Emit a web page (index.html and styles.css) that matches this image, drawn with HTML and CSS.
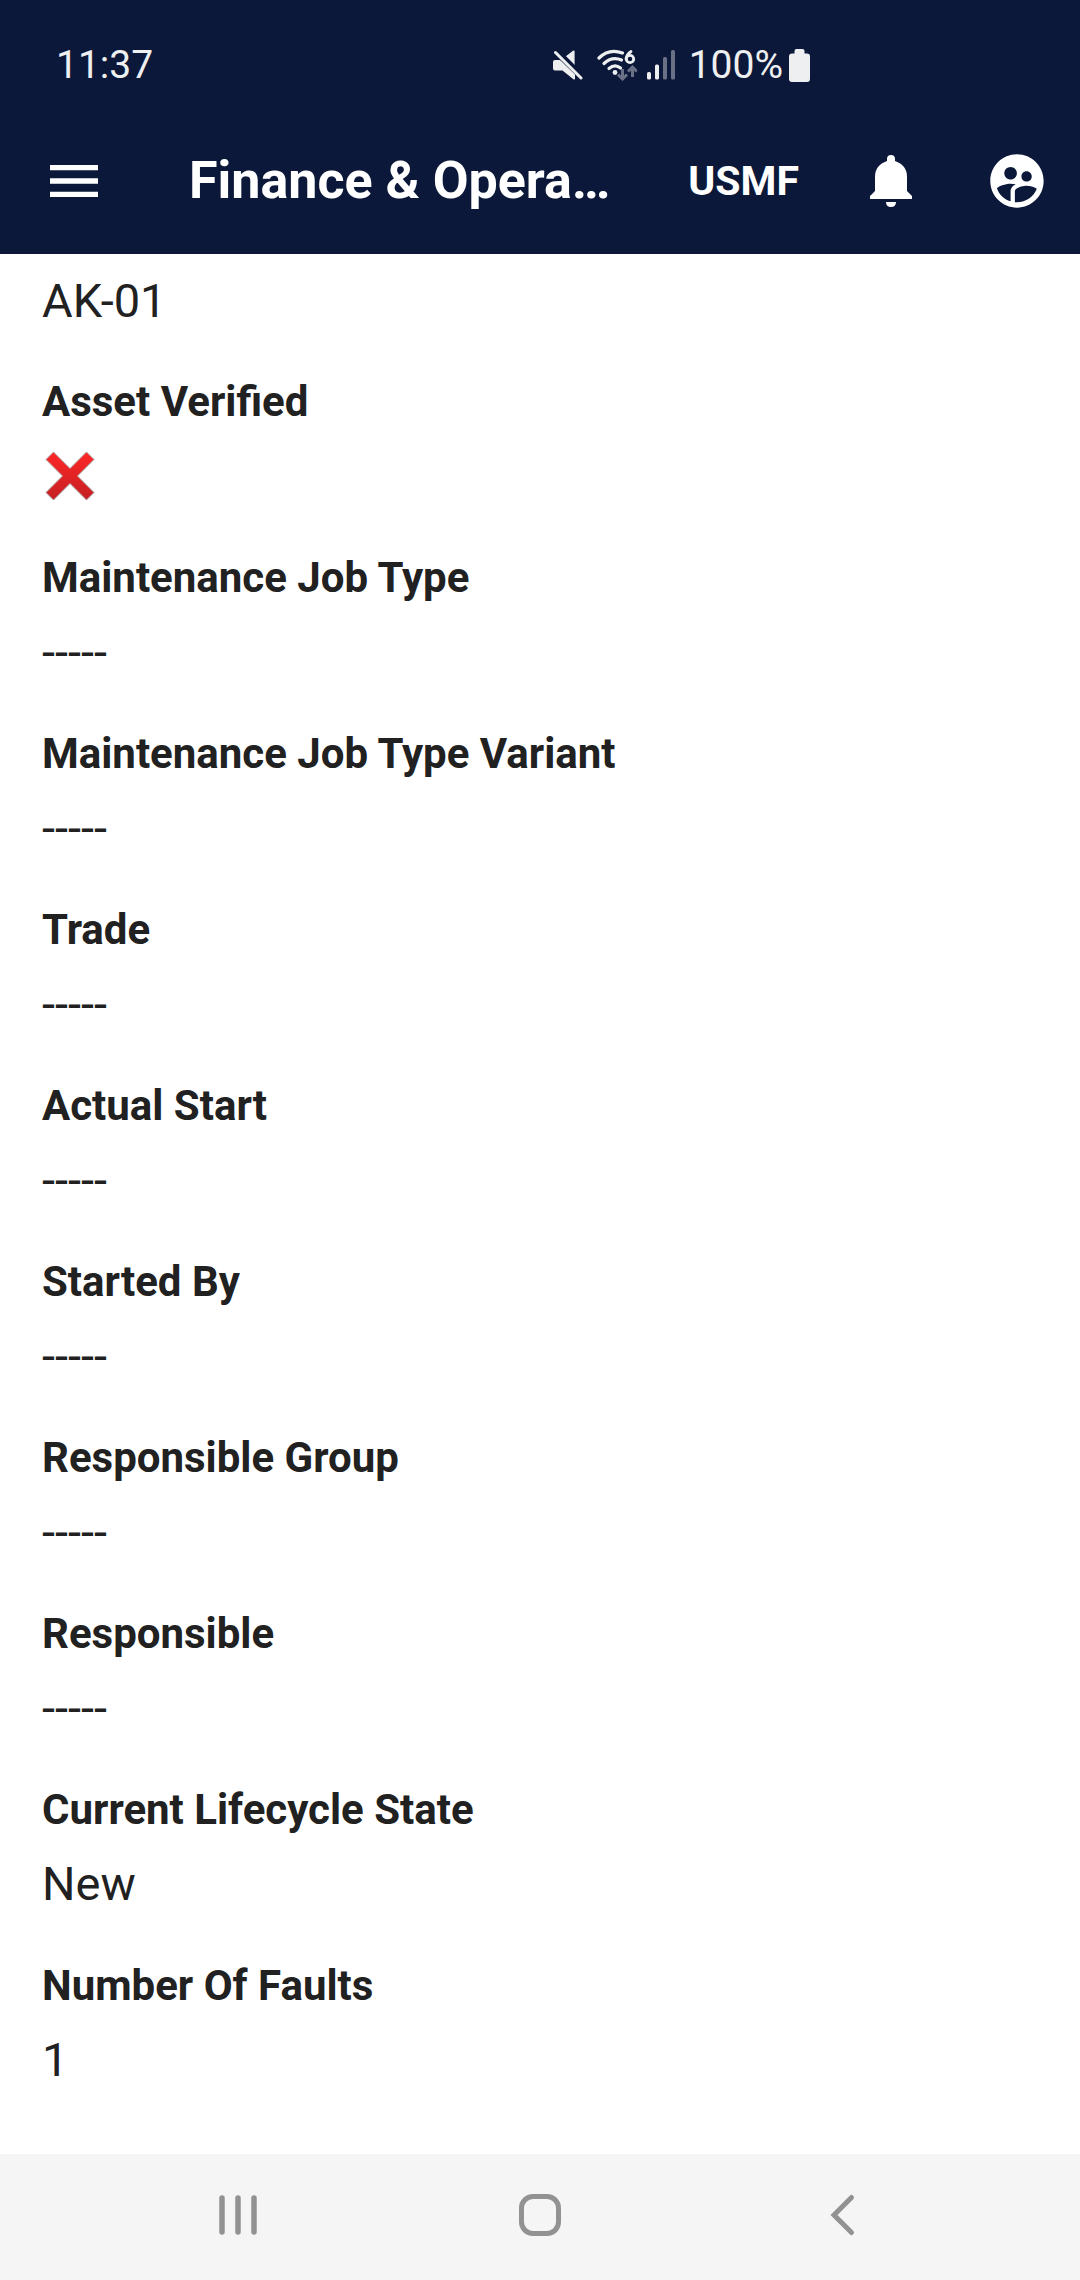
FILE: index.html
```html
<!DOCTYPE html>
<html lang="en">
<head>
<meta charset="utf-8">
<meta name="viewport" content="width=device-width, initial-scale=1">
<title>Finance &amp; Operations</title>
<link rel="stylesheet" href="styles.css">
</head>
<body>
<header class="header">
  <div class="status">
    <span class="status-time">11:37</span>
    <div class="status-icons">
      <svg class="icon-mute" width="30" height="32" viewBox="0 0 30 32" aria-hidden="true">
        <path fill="#eeeff1" d="M12.500 7.500 20 1.800q1.600-.8 1.600.8v14.200zM2 11h5l15 14.500v4q0 1.700-1.600.7L9.500 21.500H2q-2 0-2-2V13q0-2 2-2z"/>
        <path stroke="#0b1839" stroke-width="2.500" d="M5 1 31 27"/>
        <path stroke="#eeeff1" stroke-width="3" stroke-linecap="round" d="M2.500 3.500 28 29"/>
      </svg>
      <svg class="icon-wifi" width="40" height="32" viewBox="0 0 40 32" aria-hidden="true">
        <g fill="none" stroke="#eeeff1" stroke-width="3.200" stroke-linecap="round">
          <path d="M2 9Q12-1 25.500 4"/>
          <path d="M7 14.500Q15 7 24.500 11"/>
          <path d="M12 19.500Q18 14.500 23.500 19"/>
          <path stroke="#0b1839" stroke-width="6" d="M34 2Q29 6 29 10"/>
          <path stroke-width="2.800" d="M34 2.500Q29.500 5.500 29 10"/>
          <circle cx="33" cy="10" r="3.700" stroke-width="2.800"/>
        </g>
        <circle cx="18" cy="23.500" r="2.400" fill="#eeeff1"/>
        <path fill="none" stroke="#6a7187" stroke-width="3" d="M25.500 20v10M21 25.500l4.500 4.500 4.500-4.500M35.500 28V18M31 22.500l4.500-4.500 4.500 4.500"/>
      </svg>
      <svg class="icon-signal" width="28" height="32" viewBox="0 0 28 32" aria-hidden="true">
        <g fill="#eeeff1"><rect y="23" width="4" height="7.500" rx="1.500"/><rect x="8" y="15.500" width="4" height="15" rx="1.500"/></g>
        <g fill="#6a7187"><rect x="16" y="8" width="4" height="22.500" rx="1.500"/><rect x="24" y="1" width="4" height="29.500" rx="1.500"/></g>
      </svg>
      <span class="status-battery">100%</span>
      <svg class="icon-battery" width="21" height="33" viewBox="0 0 21 33" aria-hidden="true">
        <path fill="#eeeff1" d="M7.500 0h6q2 0 2 2v2.500H18q3 0 3 3V30q0 3-3 3H3q-3 0-3-3V7.500q0-3 3-3h2.500V2q0-2 2-2z"/>
      </svg>
    </div>
  </div>
  <div class="appbar">
    <button class="icon-button" type="button" aria-label="Menu">
      <svg width="64" height="64" viewBox="0 0 24 24"><path fill="#fff" d="M3 18h18v-2H3v2zm0-5h18v-2H3v2zm0-7v2h18V6H3z"/></svg>
    </button>
    <h1 class="title">Finance &amp; Opera…</h1>
    <button class="company" type="button">USMF</button>
    <button class="icon-button bell" type="button" aria-label="Notifications">
      <svg width="64" height="64" viewBox="0 0 64 64"><path fill="#fff" d="M28 10q0-4 4-4t4 4v2q12 4 12 16v14l5 5v3H11v-3l5-5V28q0-12 12-16zM27 53h10q0 5-5 5t-5-5z"/></svg>
    </button>
    <button class="icon-button" type="button" aria-label="Account">
      <svg width="64" height="64" viewBox="0 0 24 24"><path fill="#fff" d="M11.990 2c-5.520 0-10 4.480-10 10s4.480 10 10 10 10-4.480 10-10-4.480-10-10-10zm3.610 6.340c1.070 0 1.930.86 1.930 1.930 0 1.070-.86 1.930-1.930 1.930-1.070 0-1.930-.86-1.930-1.930-.01-1.070.86-1.930 1.930-1.930zm-6-1.580c1.300 0 2.360 1.060 2.360 2.360 0 1.300-1.060 2.360-2.360 2.360s-2.360-1.060-2.360-2.360c0-1.310 1.050-2.360 2.360-2.360zm0 9.130v3.750c-2.400-.75-4.300-2.600-5.140-4.960 1.050-1.120 3.670-1.690 5.140-1.690.53 0 1.200.08 1.900.22-1.640.87-1.900 2.020-1.900 2.680zM11.990 20c-.27 0-.53-.01-.79-.04v-4.070c0-1.420 2.940-2.130 4.400-2.130 1.070 0 2.920.39 3.840 1.150-1.170 2.970-4.060 5.090-7.450 5.090z"/></svg>
    </button>
  </div>
</header>

<main class="content">
  <p class="value">AK-01</p>
  <dl class="fields">
    <div class="field">
      <dt class="label">Asset Verified</dt>
      <dd class="value cross">
        <svg width="50" height="50" viewBox="0 0 50 50" role="img" aria-label="No">
          <defs><linearGradient id="red" x1="0" y1="0" x2="0" y2="1"><stop offset="0" stop-color="#ff2626"/><stop offset="1" stop-color="#c42024"/></linearGradient></defs>
          <path fill="url(#red)" stroke="#a9a3a3" stroke-width="1" d="M8.500 1 25 17.500 41.500 1 49 8.500 32.500 25 49 41.500 41.500 49 25 32.500 8.500 49 1 41.500 17.500 25 1 8.500z"/>
        </svg>
      </dd>
    </div>
    <div class="field"><dt class="label">Maintenance Job Type</dt><dd class="value">-----</dd></div>
    <div class="field"><dt class="label">Maintenance Job Type Variant</dt><dd class="value">-----</dd></div>
    <div class="field"><dt class="label">Trade</dt><dd class="value">-----</dd></div>
    <div class="field"><dt class="label">Actual Start</dt><dd class="value">-----</dd></div>
    <div class="field"><dt class="label">Started By</dt><dd class="value">-----</dd></div>
    <div class="field"><dt class="label">Responsible Group</dt><dd class="value">-----</dd></div>
    <div class="field"><dt class="label">Responsible</dt><dd class="value">-----</dd></div>
    <div class="field"><dt class="label">Current Lifecycle State</dt><dd class="value">New</dd></div>
    <div class="field"><dt class="label">Number Of Faults</dt><dd class="value">1</dd></div>
  </dl>
</main>

<nav class="navbar" aria-label="System">
  <button class="nav-button" type="button" aria-label="Recent apps">
    <svg width="48" height="48" viewBox="0 0 48 48"><path stroke="#929292" stroke-width="5.500" stroke-linecap="round" d="M8 7v34M24 7v34M40 7v34"/></svg>
  </button>
  <button class="nav-button" type="button" aria-label="Home">
    <svg width="48" height="48" viewBox="0 0 48 48"><rect x="5.500" y="5.500" width="37" height="37" rx="11.500" fill="none" stroke="#929292" stroke-width="5"/></svg>
  </button>
  <button class="nav-button" type="button" aria-label="Back">
    <svg width="48" height="48" viewBox="0 0 48 48"><path fill="none" stroke="#929292" stroke-width="5" stroke-linecap="round" d="M33.500 6.500 16 24l17.500 17.500"/></svg>
  </button>
</nav>
</body>
</html>
```
FILE: styles.css
```css
* {
  box-sizing: border-box;
}

body {
  margin: 0;
  min-height: 100vh;
  display: flex;
  flex-direction: column;
  background: #fff;
  color: #212121;
  font-family: Roboto, "Liberation Sans", sans-serif;
}

button {
  margin: 0;
  padding: 0;
  border: 0;
  background: none;
  color: inherit;
  font-family: inherit;
}

svg {
  display: block;
  flex: none;
}

.header {
  background: #0b1839;
  color: #fff;
}

.status {
  display: flex;
  align-items: center;
  justify-content: space-between;
  height: 108px;
  padding: 22px 25% 0 56px;
  color: #eeeff1;
  font-size: 39px;
  line-height: 48px;
}

.status-icons {
  display: flex;
  align-items: center;
}

.icon-wifi {
  margin-left: 14px;
}

.icon-signal {
  margin-left: 10px;
}

.status-battery {
  margin-left: 14px;
}

.icon-battery {
  margin-left: 6px;
}

.appbar {
  display: flex;
  align-items: center;
  height: 146px;
  padding: 0 31px 0 42px;
}

.icon-button {
  flex: none;
}

.title {
  flex: 1;
  min-width: 0;
  margin: 0 0 0 83px;
  overflow: hidden;
  white-space: nowrap;
  font-size: 52px;
  font-weight: 700;
  line-height: 64px;
}

.company {
  font-size: 41px;
  font-weight: 700;
  line-height: 48px;
}

.bell {
  margin: 0 62px 0 60px;
}

.content {
  flex: 1;
  padding: 13px 42px 38px;
}

.fields {
  display: grid;
  gap: 38px;
  margin: 37px 0 0;
}

.label {
  margin-bottom: 10px;
  font-size: 42px;
  font-weight: 700;
  line-height: 60px;
}

.value {
  margin: 0;
  font-size: 47px;
  line-height: 68px;
}

.cross {
  display: flex;
  align-items: center;
  height: 68px;
  padding-left: 3px;
}

.navbar {
  display: grid;
  grid-template-columns: repeat(3, 1fr);
  align-items: center;
  height: 126px;
  padding: 0 8% 4px;
  background: #f5f5f5;
}

.nav-button {
  display: flex;
  justify-content: center;
}
```
